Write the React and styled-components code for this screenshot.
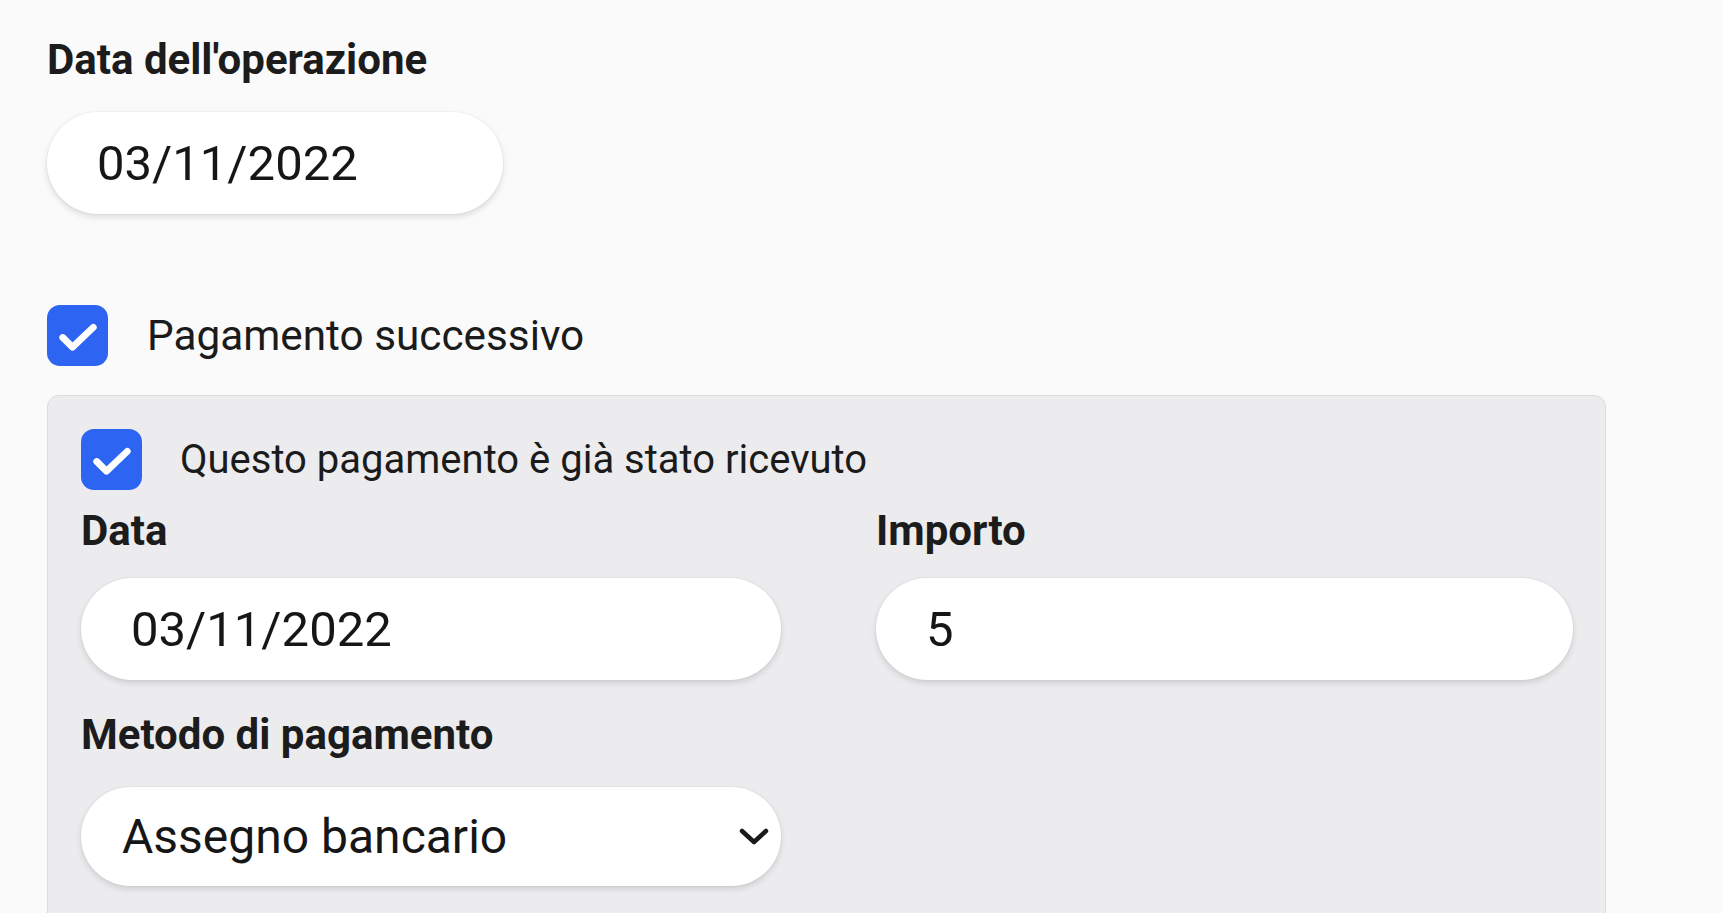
import React from "react";
import styled, { createGlobalStyle } from "styled-components";

const GlobalStyle = createGlobalStyle`
  html, body {
    margin: 0;
    padding: 0;
    background: #fafafa;
    font-family: Roboto, "Noto Sans", Arial, sans-serif;
    color: #1b1b1b;
    overflow: hidden;
  }
  * { box-sizing: border-box; }
`;

const Page = styled.div`
  width: 1606px;
  padding: 36px 0 0 47px;
  display: flex;
  flex-direction: column;
`;

const Field = styled.div`
  display: flex;
  flex-direction: column;
  margin-top: ${(p) => p.$top || 0}px;
`;

const Label = styled.label`
  font-size: 42px;
  line-height: 48px;
  font-weight: 700;
  color: #1c1c1c;
  margin-bottom: ${(p) => (p.$mb != null ? p.$mb : 28)}px;
`;

const TextInput = styled.input`
  appearance: none;
  width: ${(p) => (p.$width ? `${p.$width}px` : "100%")};
  height: 102px;
  border: none;
  border-radius: 52px;
  background: #ffffff;
  box-shadow: 0 3px 6px rgba(0, 0, 0, 0.13), 0 0 0 1px rgba(0, 0, 0, 0.025);
  padding: 0 0 0 50px;
  font-family: Roboto, Arial, sans-serif;
  font-size: 49px;
  color: #161616;
  outline: none;
`;

const SelectWrap = styled.div`
  position: relative;
  width: 100%;
`;

const Select = styled.select`
  appearance: none;
  width: 100%;
  height: 99px;
  border: none;
  border-radius: 50px;
  background: #ffffff;
  box-shadow: 0 3px 6px rgba(0, 0, 0, 0.13), 0 0 0 1px rgba(0, 0, 0, 0.025);
  padding: 0 0 0 41px;
  font-family: Roboto, Arial, sans-serif;
  font-size: 48px;
  color: #161616;
  outline: none;
`;

const Chevron = styled.svg`
  position: absolute;
  right: 12px;
  top: 50%;
  transform: translateY(-50%);
  width: 30px;
  height: 18px;
  pointer-events: none;
`;

const CheckRow = styled.div`
  display: flex;
  align-items: center;
  gap: ${(p) => p.$gap || 39}px;
  margin-top: ${(p) => p.$top || 0}px;
`;

const Box = styled.span`
  width: 61px;
  height: 61px;
  border-radius: 13px;
  background: #2d64f1;
  display: inline-flex;
  align-items: center;
  justify-content: center;
  flex: none;
`;

const CheckText = styled.span`
  font-size: ${(p) => p.$size || 40}px;
  line-height: 50px;
  color: #1b1b1b;
`;

const Panel = styled.div`
  margin-top: 29px;
  background: #ececee;
  border: 1px solid #dcdcde;
  border-radius: 12px;
  padding: 33px 33px 60px 33px;
  display: flex;
  flex-direction: column;
`;

const Grid = styled.div`
  display: grid;
  grid-template-columns: 700px 697px;
  column-gap: 95px;
  margin-top: 17px;
`;

const Check = () => (
  <Box>
    <svg viewBox="0 0 24 24" width="61" height="61">
      <polyline
        points="6.2,12.8 10,16.6 18.2,8.8"
        fill="none"
        stroke="#ffffff"
        strokeWidth="2.7"
        strokeLinecap="round"
        strokeLinejoin="round"
      />
    </svg>
  </Box>
);

export default function App() {
  return (
    <>
      <GlobalStyle />
      <Page>
        <Field>
          <Label>Data dell'operazione</Label>
          <TextInput $width={456} type="text" defaultValue="03/11/2022" />
        </Field>

        <CheckRow $top={91}>
          <Check />
          <CheckText $size={42.3}>Pagamento successivo</CheckText>
        </CheckRow>

        <Panel>
          <CheckRow $gap={38}>
            <Check />
            <CheckText $size={40}>Questo pagamento è già stato ricevuto</CheckText>
          </CheckRow>
          <Grid>
            <Field>
              <Label $mb={23}>Data</Label>
              <TextInput type="text" defaultValue="03/11/2022" />
            </Field>
            <Field>
              <Label $mb={23}>Importo</Label>
              <TextInput type="text" defaultValue="5" />
            </Field>
            <Field $top={31}>
              <Label $mb={28}>Metodo di pagamento</Label>
              <SelectWrap>
                <Select defaultValue="assegno">
                  <option value="assegno">Assegno bancario</option>
                  <option value="contanti">Contanti</option>
                  <option value="bonifico">Bonifico</option>
                </Select>
                <Chevron viewBox="0 0 30 18">
                  <polyline
                    points="3,3 15,14 27,3"
                    fill="none"
                    stroke="#1a1a1a"
                    strokeWidth="4.5"
                    strokeLinecap="round"
                    strokeLinejoin="round"
                  />
                </Chevron>
              </SelectWrap>
            </Field>
          </Grid>
        </Panel>
      </Page>
    </>
  );
}
